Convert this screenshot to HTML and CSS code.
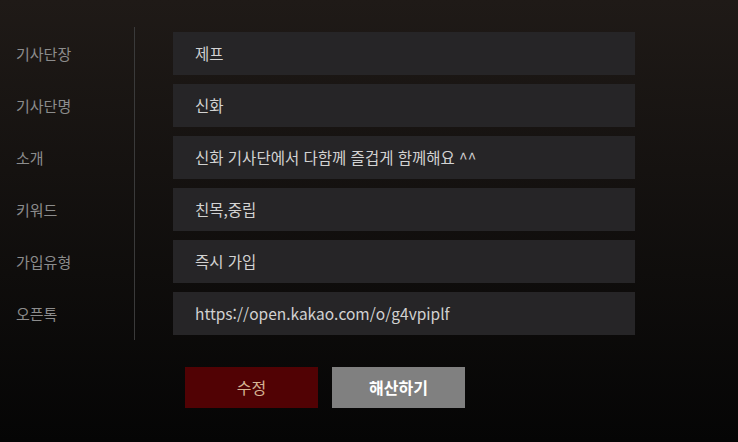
FILE: index.html
```html
<!DOCTYPE html>
<html lang="ko">
<head>
    <meta charset="UTF-8">
    <meta name="viewport" content="width=device-width, initial-scale=1.0">
    <title>기사단 정보</title>
    <link rel="stylesheet" href="styles.css">
</head>
<body>
    <div class="container">
        <div class="info-wrapper">
            <div class="labels">
                <div class="label">기사단장</div>
                <div class="label">기사단명</div>
                <div class="label">소개</div>
                <div class="label">키워드</div>
                <div class="label">가입유형</div>
                <div class="label">오픈톡</div>
            </div>
            <div class="values">
                <div class="value">제프</div>
                <div class="value">신화</div>
                <div class="value">신화 기사단에서 다함께 즐겁게 함께해요 ^^</div>
                <div class="value">친목,중립</div>
                <div class="value">즉시 가입</div>
                <div class="value">https://open.kakao.com/o/g4vpiplf</div>
            </div>
        </div>
        <div class="btn-wrapper">
            <div class="btn btn-edit">수정</div>
            <div class="btn btn-disband">해산하기</div>
        </div>
    </div>
</body>
</html>
```

FILE: styles.css
```css
* {
    margin: 0;
    padding: 0;
    box-sizing: border-box;
}
html {
    height: 100%;
}
body {
    height: 100%;
    font-family: "Noto Sans CJK KR", "Noto Sans", sans-serif;
}
.container {
    height: 100%;
    padding-top: 27px;
    background-image: linear-gradient(to bottom, #1f1a17, #050505);
}
.info-wrapper {
    display: flex;
}
.labels {
    width: 135px;
    padding: 5px 0;
    border-right: 1px solid #3a3a3a;
    display: flex;
    flex-direction: column;
    gap: 9px;
}
.label {
    height: 43px;
    line-height: 43px;
    padding-left: 16px;
    font-size: 15px;
    color: #8c8c8c;
}
.values {
    padding: 5px 0 5px 38px;
    display: flex;
    flex-direction: column;
    gap: 9px;
}
.value {
    width: 462px;
    height: 43px;
    line-height: 42px;
    padding-left: 22px;
    background-color: #262527;
    font-size: 15.5px;
    color: #d2d2d2;
}
.btn-wrapper {
    display: flex;
    gap: 14px;
    margin-top: 27px;
    padding-left: 185px;
}
.btn {
    width: 133px;
    height: 41px;
    line-height: 40px;
    text-align: center;
    font-size: 16px;
    cursor: pointer;
}
.btn-edit {
    background-color: #510204;
    color: #d6b594;
}
.btn-disband {
    background-color: #808080;
    color: #fff;
    font-weight: bold;
}
```
